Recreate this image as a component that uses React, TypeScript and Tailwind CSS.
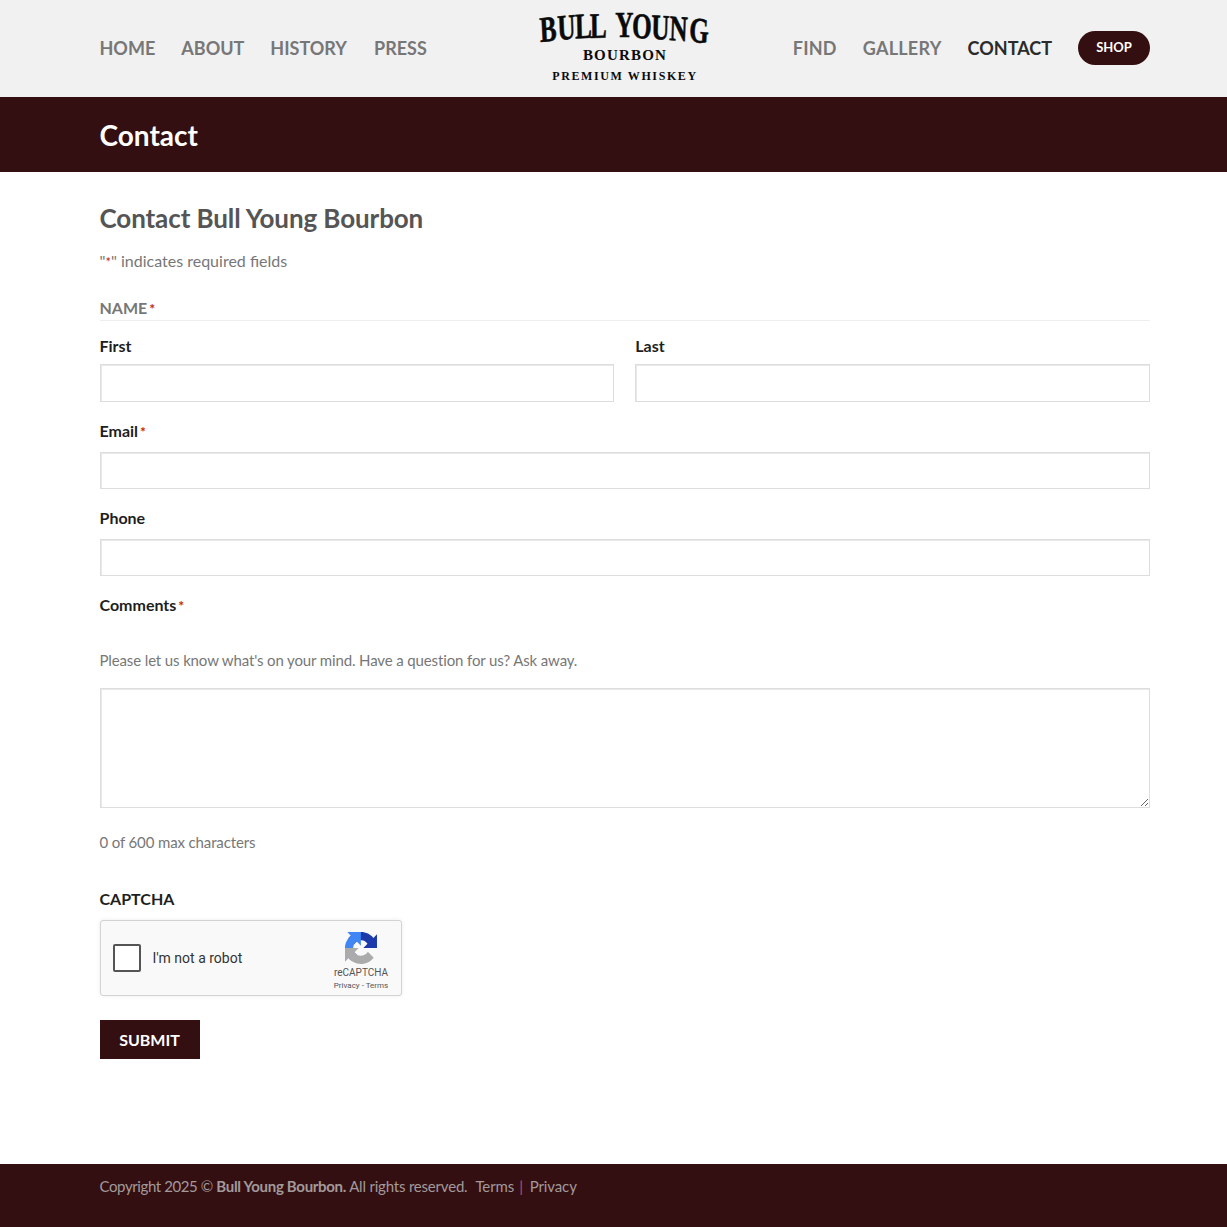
import React from 'react';

const lato = 'font-["Lato",sans-serif]';

function Required() {
  return <span className="ml-[2px] text-[14px] leading-[16px] font-bold text-[#c02b0a]">*</span>;
}

function Logo() {
  return (
    <svg width="210" height="97" viewBox="0 0 210 97" className="block">
      <g transform="scale(0.7 1)">
        <text
          fontFamily="Liberation Serif, serif"
          fontWeight="700"
          fontSize="36"
          fill="#0a0a0a"
          stroke="#0a0a0a"
          strokeWidth="0.6"
          x="29 54 79 100 130 136 160 187 213 241"
          y="42 40 38.500 38 38 37 38 39 40 41.500"
          rotate="-4 -3 -2 -1 0 0 1 2 3 4"
        >
          BULL YOUNG
        </text>
      </g>
      <text x="105" y="60" textAnchor="middle" fontFamily="Liberation Serif, serif" fontWeight="700" fontSize="15" letterSpacing="1.2" fill="#0a0a0a">
        BOURBON
      </text>
      <text x="105" y="80" textAnchor="middle" fontFamily="Liberation Serif, serif" fontWeight="700" fontSize="12" letterSpacing="1.6" fill="#0a0a0a">
        PREMIUM WHISKEY
      </text>
    </svg>
  );
}

function RecaptchaMark() {
  return (
    <svg width="32" height="32" viewBox="0 0 64 64" className="block">
      <path d="M64 31.955l-.033-1.37V4.687l-7.16 7.16C50.948 4.674 42.033.093 32.05.093c-10.4 0-19.622 4.96-25.458 12.64l11.736 11.86a15.55 15.55 0 0 1 4.754-5.334c2.05-1.6 4.952-2.906 8.968-2.906.485 0 .86.057 1.135.163 4.976.393 9.288 3.14 11.828 7.124l-8.307 8.307c10.52-.04 22.4-.066 27.295.003" fill="#1c3aa9" />
      <path d="M31.862.094l-1.37.033H4.594l7.16 7.16C4.58 13.147 0 22.06 0 32.046c0 10.4 4.96 19.622 12.64 25.458l11.86-11.736a15.55 15.55 0 0 1-5.334-4.754c-1.6-2.05-2.906-4.952-2.906-8.968 0-.485.057-.86.163-1.135.393-4.976 3.14-9.288 7.124-11.828l8.307 8.307c-.04-10.52-.066-22.4.003-27.295" fill="#4285f4" />
      <path d="M.001 32.045l.033 1.37v25.898l7.16-7.16c5.86 7.173 14.774 11.754 24.76 11.754 10.4 0 19.622-4.96 25.458-12.64l-11.736-11.86a15.55 15.55 0 0 1-4.754 5.334c-2.05 1.6-4.952 2.906-8.968 2.906-.485 0-.86-.057-1.135-.163-4.976-.393-9.288-3.14-11.828-7.124l8.307-8.307c-10.52.04-22.4.066-27.295-.003" fill="#ababab" />
    </svg>
  );
}

function Field({ className = '' }: { className?: string }) {
  return <div className={`border border-[#dddddd] bg-white shadow-[inset_1px_1px_0_#e9e9e9] ${className}`} />;
}

export default function App() {
  return (
    <div className={`${lato} min-h-[1227px] bg-white flex flex-col text-[16px] text-[#777777]`}>
      <header className="h-[97px] bg-[#f1f1f1]">
        <div className="ml-[99.5px] w-[1050.5px] h-[96px] grid grid-cols-[1fr_210px_1fr] items-center text-[18px] font-bold text-[#777777]">
          <nav className="flex gap-[26px]">
            <a>HOME</a>
            <a>ABOUT</a>
            <a>HISTORY</a>
            <a className="ml-[1px]">PRESS</a>
          </nav>
          <div className="h-[96px] w-[210px] self-start">
            <Logo />
          </div>
          <nav className="flex items-center justify-end gap-[26px]">
            <a className="tracking-[0.2px]">FIND</a>
            <a className="tracking-[0.25px]">GALLERY</a>
            <a className="text-[#2b2b2b]">CONTACT</a>
            <a className="h-[34px] w-[72px] rounded-full bg-[#340f12] text-white text-[13px] font-bold flex items-center justify-center">
              SHOP
            </a>
          </nav>
        </div>
      </header>

      <div className="h-[75px] bg-[#340f12]">
        <div className="ml-[99.5px] w-[1050.5px] h-full flex items-center text-[28px] font-bold text-white">Contact</div>
      </div>

      <main className="ml-[99.5px] w-[1050.5px] flex-1">
        <h1 className="mt-[28px] text-[26px] tracking-[-0.1px] leading-[36px] font-bold text-[#555555]">Contact Bull Young Bourbon</h1>
        <p className="mt-[13px] leading-[24px]">
          "<span className="text-[13px] text-[#c02b0a]">*</span>" indicates required fields
        </p>

        <div className="mt-[22px] h-[25px] border-b border-[#eeeeee] font-bold text-[16px] leading-[24px]">
          NAME
          <Required />
        </div>
        <div className="mt-[13px] grid grid-cols-2 gap-[21px]">
          <div>
            <label className="block font-bold text-[16px] leading-[24px] text-[#1e1e1e]">First</label>
            <Field className="mt-[6px] h-[38px]" />
          </div>
          <div>
            <label className="block font-bold text-[16px] leading-[24px] text-[#1e1e1e]">Last</label>
            <Field className="mt-[6px] h-[38px]" />
          </div>
        </div>

        <label className="mt-[17px] block font-bold text-[16px] leading-[24px] text-[#1e1e1e]">
          Email
          <Required />
        </label>
        <Field className="mt-[9px] h-[37px]" />

        <label className="mt-[17px] block font-bold text-[16px] leading-[24px] text-[#1e1e1e]">Phone</label>
        <Field className="mt-[9px] h-[37px]" />

        <label className="mt-[17px] block font-bold text-[16px] leading-[24px] text-[#1e1e1e]">
          Comments
          <Required />
        </label>
        <p className="mt-[31px] text-[15px] tracking-[-0.13px] leading-[24px]">Please let us know what's on your mind. Have a question for us? Ask away.</p>
        <textarea className="mt-[16px] block h-[120px] w-full border border-[#dddddd] bg-white shadow-[inset_1px_1px_0_#e9e9e9] outline-none" />
        <p className="mt-[22px] text-[15px] tracking-[-0.13px] leading-[24px]">0 of 600 max characters</p>

        <div className="mt-[33px] font-bold text-[16px] leading-[24px] text-[#1e1e1e]">CAPTCHA</div>
        <div className="mt-[9px] h-[76px] w-[302.5px] rounded-[3px] border border-[#d3d3d3] bg-[#f9f9f9] shadow-[0_0_4px_rgba(0,0,0,0.08)] flex items-center font-['Roboto',sans-serif]">
          <div className="ml-[12px] h-[28px] w-[28px] rounded-[2px] border-2 border-[#555555] bg-white" />
          <span className="ml-[12px] text-[14px] text-[#333333]">I'm not a robot</span>
          <div className="ml-auto mr-[11px] mt-[7px] flex w-[58px] flex-col items-center">
            <RecaptchaMark />
            <span className="mt-[2px] text-[10px] leading-[14px] text-[#555555]">reCAPTCHA</span>
            <span className="whitespace-nowrap text-[8px] leading-[12px] text-[#555555]">Privacy - Terms</span>
          </div>
        </div>
        <button className="mt-[24px] block h-[39px] w-[100px] bg-[#340f12] text-[16px] font-bold text-white">SUBMIT</button>
      </main>

      <footer className="h-[63px] bg-[#340f12]">
        <div className="ml-[99.5px] w-[1050.5px] pt-[10px] text-[15px] tracking-[-0.3px] leading-[24px] text-[#a29a9a]">
          <span className="tracking-[-0.4px]">Copyright 2025 © </span>
          <strong>Bull Young Bourbon.</strong>
          <span className="tracking-[-0.2px]"> All rights reserved.</span>
          <span className="ml-[8px] tracking-[-0.1px]">Terms</span>
          <span className="ml-[5px] mr-[7px] text-[#c0506e]">|</span>
          <span className="tracking-[-0.1px]">Privacy</span>
        </div>
      </footer>
    </div>
  );
}
